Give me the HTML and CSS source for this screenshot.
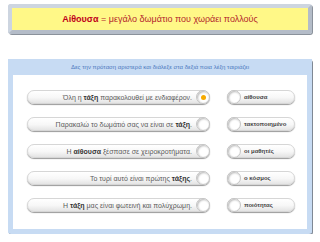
FILE: index.html
```html
<!DOCTYPE html>
<html lang="el">
<head>
    <meta charset="UTF-8">
    <title>Αίθουσα</title>
    <link rel="stylesheet" href="styles.css">
</head>
<body>
    <div class="banner">
        <div class="banner-inner"><b>Αίθουσα</b> = μεγάλο δωμάτιο που χωράει πολλούς</div>
    </div>
    <div class="panel">
        <div class="panel-head">Δες την πρόταση αριστερά και διάλεξε στα δεξιά ποια λέξη ταιριάζει</div>
        <div class="rows">
            <div class="pill left">
                <span>Όλη η <b>τάξη</b> παρακολουθεί με ενδιαφέρον.</span>
                <i class="dot on"></i>
            </div>
            <div class="pill right"><i class="dot"></i><span>αίθουσα</span></div>

            <div class="pill left">
                <span>Παρακαλώ το δωμάτιό σας να είναι σε <b>τάξη</b>.</span>
                <i class="dot"></i>
            </div>
            <div class="pill right"><i class="dot"></i><span>τακτοποιημένο</span></div>

            <div class="pill left">
                <span>Η <b>αίθουσα</b> ξέσπασε σε χειροκροτήματα.</span>
                <i class="dot"></i>
            </div>
            <div class="pill right"><i class="dot"></i><span>οι μαθητές</span></div>

            <div class="pill left">
                <span>Το τυρί αυτό είναι πρώτης <b>τάξης</b>.</span>
                <i class="dot"></i>
            </div>
            <div class="pill right"><i class="dot"></i><span>ο κόσμος</span></div>

            <div class="pill left">
                <span>Η <b>τάξη</b> μας είναι φωτεινή και πολύχρωμη.</span>
                <i class="dot"></i>
            </div>
            <div class="pill right"><i class="dot"></i><span>ποιότητας</span></div>
        </div>
    </div>
</body>
</html>
```

FILE: styles.css
```css
body {
    margin: 0;
    background: #fff;
    font-family: 'Liberation Sans', Arial, sans-serif;
}
.banner {
    margin: 4px 8px 0 8px;
    height: 30px;
    box-sizing: border-box;
    border: 4px solid #cdd5e0;
    border-right-color: #b4bcc8;
    border-bottom-color: #b4bcc8;
    border-radius: 3px;
    box-shadow: 1px 1px 0 #8a919b;
}
.banner-inner {
    height: 100%;
    background: #fff887;
    text-align: center;
    line-height: 23px;
    font-size: 9px;
    color: #b3262c;
}
.banner-inner b {
    color: #c0001a;
}
.panel {
    margin: 25px 8px 0 8px;
    box-sizing: border-box;
    height: 175px;
    border: 5px solid #c7dbf3;
    border-top: 0;
    border-radius: 3px;
    box-shadow: 1px 1px 0 #7f8894;
    background: #fff;
}
.panel-head {
    height: 16px;
    margin: 0 -5px;
    background: #c7dbf3;
    color: #4a78bd;
    font-size: 6px;
    line-height: 16px;
    text-align: center;
}
.rows {
    display: grid;
    grid-template-columns: 183px 68px;
    column-gap: 17px;
    row-gap: 13px;
    padding: 15px 0 0 14px;
}
.pill {
    height: 14px;
    box-sizing: border-box;
    border-radius: 7px;
    border: 1px solid #d6d6d6;
    background: linear-gradient(#ffffff 0%, #f7f7f7 55%, #e4e4e4 100%);
    box-shadow: 0 1px 1px #9a9a9a;
    display: flex;
    align-items: center;
    font-size: 7px;
    color: #5a5a5a;
}
.pill b {
    color: #333;
}
.left {
    justify-content: flex-end;
}
.left span {
    margin-right: 5px;
}
.right {
    font-weight: bold;
    color: #444;
    font-size: 6px;
}
.right span {
    margin-left: 4px;
}
.dot {
    width: 14px;
    height: 14px;
    margin: -1px;
    box-sizing: border-box;
    border-radius: 50%;
    border: 1px solid #c4c4c4;
    background: #fff;
    box-shadow: inset 1px 1px 2px #bbb;
    display: flex;
    align-items: center;
    justify-content: center;
    flex-shrink: 0;
}
.dot.on::after {
    content: "";
    width: 5px;
    height: 5px;
    border-radius: 50%;
    background: #f6aa00;
}
```
